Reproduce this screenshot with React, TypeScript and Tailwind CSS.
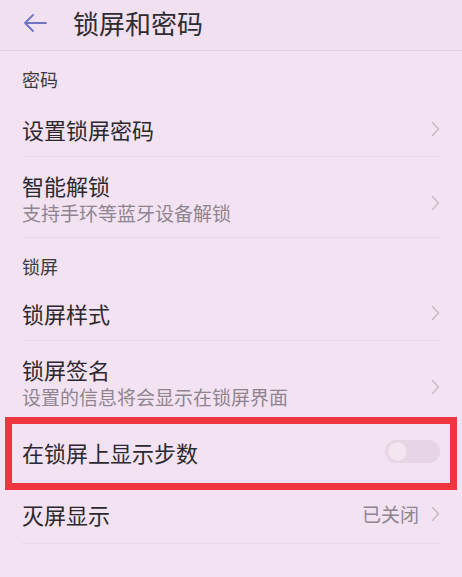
import React from "react";

const font = { fontFamily: '"Noto Sans CJK SC", "Noto Sans", sans-serif' };

function Chevron() {
  return (
    <svg width="9" height="16" viewBox="0 0 9 16" className="shrink-0">
      <path d="M1.5 1.5 L7.5 8 L1.5 14.5" fill="none" stroke="#c6bac6" strokeWidth="1.5" strokeLinecap="round" strokeLinejoin="round" />
    </svg>
  );
}

function Divider() {
  return <div className="mx-[22px] h-px bg-[#eadae8]" />;
}

function SectionHeader({ title, className }: { title: string; className: string }) {
  return (
    <div className={`px-[22px] ${className}`}>
      <span className="text-[18px] leading-[26px] text-[#3b3940]">{title}</span>
    </div>
  );
}

function NavRow({ title, height }: { title: string; height: string }) {
  return (
    <div className={`flex items-center justify-between pl-[22px] pr-[22px] ${height}`}>
      <span className="text-[22px] leading-[28px] text-[#2b292f]">{title}</span>
      <Chevron />
    </div>
  );
}

function SubRow({ title, sub, height }: { title: string; sub: string; height: string }) {
  return (
    <div className={`flex items-start justify-between pl-[22px] pr-[22px] pt-[14px] ${height}`}>
      <div className="flex flex-col">
        <span className="text-[22px] leading-[28px] text-[#2b292f]">{title}</span>
        <span className="mt-[1px] text-[19px] leading-[26px] text-[#8e8590]">{sub}</span>
      </div>
      <div className="pt-[24px]">
        <Chevron />
      </div>
    </div>
  );
}

export default function App() {
  return (
    <div style={font} className="w-[462px] h-[577px] overflow-hidden bg-[#f3e2f1]">
      <header className="flex h-[51px] items-center border-b border-[#e2cfe0] bg-[#f1e0ef] pb-[5px] pl-[22px]">
        <svg width="26" height="22" viewBox="0 0 26 22">
          <path d="M24 11 H3 M11 3 L3 11 L11 19" fill="none" stroke="#6d74c4" strokeWidth="1.8" strokeLinecap="round" strokeLinejoin="round" />
        </svg>
        <h1 className="ml-[25px] text-[26px] leading-[32px] text-[#2e2c31]">锁屏和密码</h1>
      </header>

      <SectionHeader title="密码" className="h-[56px] flex items-center" />
      <NavRow title="设置锁屏密码" height="h-[49px] pb-[6px]" />
      <Divider />
      <SubRow title="智能解锁" sub="支持手环等蓝牙设备解锁" height="h-[80px]" />
      <Divider />

      <SectionHeader title="锁屏" className="h-[53px] pt-[15px]" />
      <NavRow title="锁屏样式" height="h-[49px] pb-[6px]" />
      <Divider />
      <SubRow title="锁屏签名" sub="设置的信息将会显示在锁屏界面" height="h-[76px]" />

      <div className="relative flex h-[73px] items-center justify-between pb-[4px] pl-[22px] pr-[22px]">
        <span className="text-[22px] leading-[28px] text-[#2b292f]">在锁屏上显示步数</span>
        <div className="flex h-[23px] w-[55px] items-center rounded-full bg-[#e7d5e5] pl-[3px]">
          <div className="h-[19px] w-[19px] rounded-full bg-[#f3e6f1] shadow-[0_0_1px_rgba(0,0,0,0.08)]" />
        </div>
        <div className="pointer-events-none absolute inset-y-0 left-[5px] right-[5px] border-[7px] border-[#ef3540]" />
      </div>

      <div className="flex h-[53px] items-center justify-between pb-[6px] pl-[22px] pr-[22px]">
        <span className="text-[22px] leading-[28px] text-[#2b292f]">灭屏显示</span>
        <div className="flex items-center gap-[12px]">
          <span className="text-[19px] leading-[26px] text-[#8e8590]">已关闭</span>
          <Chevron />
        </div>
      </div>
      <Divider />
    </div>
  );
}
